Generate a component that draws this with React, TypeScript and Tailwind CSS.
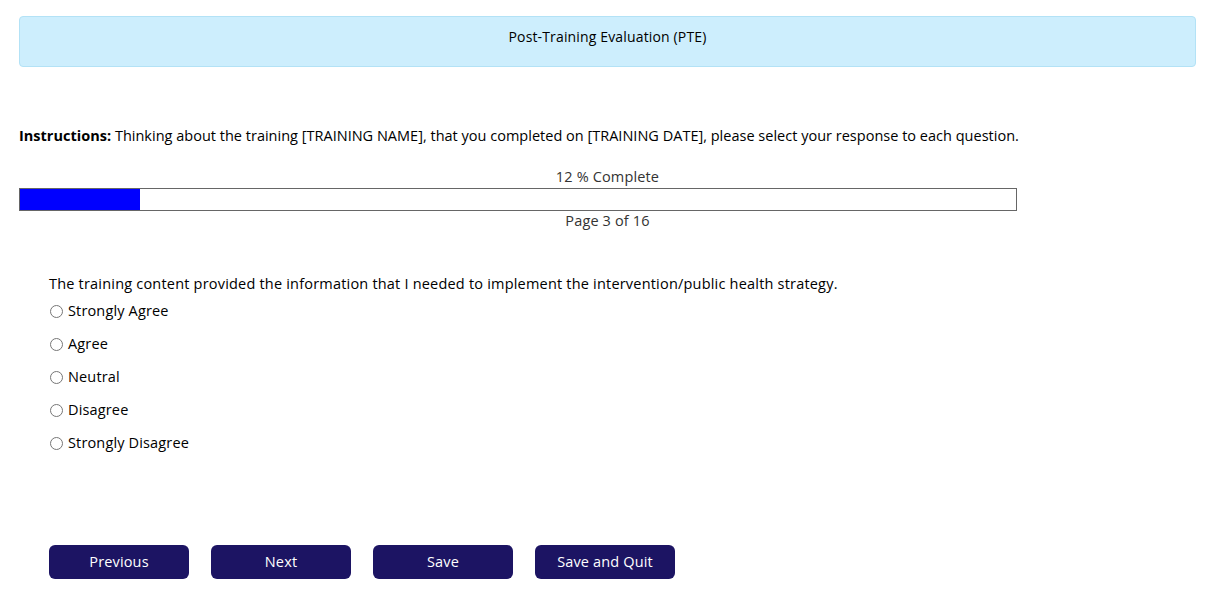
import React from 'react';

const options = ['Strongly Agree', 'Agree', 'Neutral', 'Disagree', 'Strongly Disagree'];
const buttons = ['Previous', 'Next', 'Save', 'Save and Quit'];

export default function App() {
  const percent = 12;

  return (
    <div className="min-h-screen bg-white text-[14.5px] tracking-[0.15px] text-black" style={{ fontFamily: '"Open Sans", sans-serif' }}>
      <div className="px-[19px] pt-4">
        {/* Title banner */}
        <div className="h-[51px] flex items-center justify-center bg-[#cdeefd] border border-[#b3e2f6] rounded-[4px] pb-[10px]">
          <h1 className="text-[14px]">Post-Training Evaluation (PTE)</h1>
        </div>

        {/* Instructions */}
        <p className="mt-[59px] leading-[20px] tracking-[0.01px]">
          <span className="font-bold">Instructions:</span> Thinking about the training [TRAINING NAME], that you completed on [TRAINING DATE], please select your response to each question.
        </p>

        {/* Progress */}
        <div className="mt-[21px]">
          <div className="text-center text-[#333] leading-[20px]">{percent} % Complete</div>
          <div className="w-[998px] h-[23px] border border-[#666] mt-[1px]">
            <div className="h-full bg-[#0000ff]" style={{ width: '120px' }} />
          </div>
          <div className="text-center text-[#333] leading-[20px]">Page 3 of 16</div>
        </div>
      </div>

      {/* Question */}
      <div className="px-[49px] mt-[43px]">
        <p className="leading-[20px] tracking-[0.2px]">
          The training content provided the information that I needed to implement the intervention/public health strategy.
        </p>
        <div className="flex flex-col">
          {options.map((o, i) => (
            <label key={o} className={`flex items-center gap-[5px] h-[20px] ${i === 0 ? 'mt-[7px]' : 'mt-[13px]'}`}>
              <input type="radio" name="q" className="m-0 ml-[1px] w-[13px] h-[13px]" />
              <span>{o}</span>
            </label>
          ))}
        </div>

        {/* Navigation */}
        <div className="flex gap-[22px] mt-[92px]">
          {buttons.map((b) => (
            <button key={b} className="w-[140px] h-[34px] rounded-[6px] bg-[#1c1463] text-white text-[14.5px]">
              {b}
            </button>
          ))}
        </div>
      </div>
    </div>
  );
}
